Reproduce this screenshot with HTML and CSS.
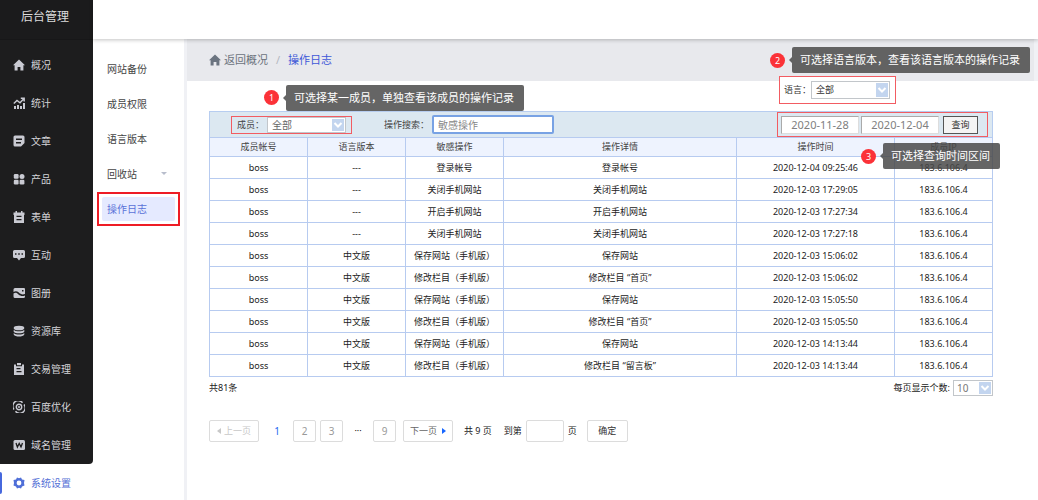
FILE: index.html
```html
<!DOCTYPE html>
<html lang="zh-CN">
<head>
    <meta charset="UTF-8">
    <meta name="viewport" content="width=device-width, initial-scale=1.0">
    <title>操作日志</title>
    <link rel="stylesheet" href="styles.css">
</head>
<body>
    <div class="app">
        <aside class="sidebar">
            <div class="brand">后台管理</div>
            <nav class="menu">
                <a href="#"><svg viewBox="0 0 12 12"><path d="M6 .5 0 6.300h1.600V11.500h3V8h2.800v3.500h3V6.300H12z"/></svg>概况</a>
                <a href="#"><svg viewBox="0 0 12 12"><path d="M1 9h2v3H1zM4 8h2v4H4zM7 9h2v3H7zM10 6h2v6h-2z"/><path class="line" d="M.8 6.500 4 3.500l3 2.200L11 1.500M7.800 1.200H11.200V4.500"/></svg>统计</a>
                <a href="#"><svg viewBox="0 0 12 12"><path fill-rule="evenodd" d="M2 .5h8A1.500 1.500 0 0 1 11.500 2v6L8 11.500H2A1.500 1.500 0 0 1 .5 10V2A1.500 1.500 0 0 1 2 .5zM3 3.500V5h6V3.500zM3 7v1.500h5V7z"/></svg>文章</a>
                <a href="#"><svg viewBox="0 0 12 12"><rect x=".8" y="1" width="4.800" height="4.800" rx="1.200"/><circle cx="9" cy="3.400" r="2.500"/><rect x=".8" y="6.700" width="4.800" height="4.800" rx="1.200"/><rect x="6.600" y="6.700" width="4.800" height="4.800" rx="1.200"/></svg>产品</a>
                <a href="#"><svg viewBox="0 0 12 12"><path fill-rule="evenodd" d="M.5 1.500H2.500V0H4v1.500h4V0h1.500v1.500h2V4h-.5v8H1V4H.5zM3.500 4.800V6h5V4.800zM3.500 8v1.200h5V8z"/></svg>表单</a>
                <a href="#"><svg viewBox="0 0 12 12"><path fill-rule="evenodd" d="M1.500 1h9A1.500 1.500 0 0 1 12 2.500v5A1.500 1.500 0 0 1 10.500 9H8l-2 2.500L4 9H1.500A1.500 1.500 0 0 1 0 7.500v-5A1.500 1.500 0 0 1 1.500 1zM2 4.300v1.500h1.500V4.300zM5.200 4.300v1.500h1.600V4.300zM8.500 4.300v1.500H10V4.300z"/></svg>互动</a>
                <a href="#"><svg viewBox="0 0 12 12"><path fill-rule="evenodd" d="M2 1h8.500A1.300 1.300 0 0 1 12 2.500V7C9 8 7.500 7 5.500 5.200 4 4 2 4 .5 5V2.500A1.500 1.500 0 0 1 2 1zM9 3v1.600h1.500V3zM.5 6.500C2.500 5.200 4 6 5.500 7.500 7.500 9 9.500 9.500 12 8.500v1a1.500 1.500 0 0 1-1.500 1.500H2A1.500 1.500 0 0 1 .5 9.500z"/></svg>图册</a>
                <a href="#"><svg viewBox="0 0 12 12"><ellipse cx="6" cy="3" rx="5.300" ry="2.300"/><path d="M.7 4.800c2 2 8.600 2 10.600 0v1.900c-1.500 2.200-9.100 2.200-10.600 0z"/><path d="M.7 8c2 2 8.600 2 10.600 0v1.500c-1.500 2.700-9.100 2.700-10.600 0z"/></svg>资源库</a>
                <a href="#"><svg viewBox="0 0 12 12"><path fill-rule="evenodd" d="M1 1.500h2V3.200h6V1.500h2V12H1zM3.500 5v1.300h4V5zM3.500 8v1.300h5V8z"/><path d="M4 0h4v2.200H4z"/></svg>交易管理</a>
                <a href="#"><svg viewBox="0 0 12 12"><path class="line" d="M1 8.500A5.400 5.400 0 0 1 9.500 1.700M11 3.500A5.400 5.400 0 0 1 2.500 10.300"/><circle class="line" cx="6" cy="6" r="2.700"/><circle cx="6" cy="6" r="1"/></svg>百度优化</a>
                <a href="#"><svg viewBox="0 0 12 12"><rect x=".5" y="1" width="11.500" height="10" rx="1.500"/><path class="mark" d="m3 4 1.400 4L6.200 4.500 8 8l1.500-4"/></svg>域名管理</a>
            </nav>
            <a class="settings" href="#"><svg viewBox="0 0 12 12"><path fill-rule="evenodd" d="M4 .5 6 1.200 8 .5l1 2 2.500.5-.5 3 .5 2.500-2.500 1-1 2-2-.7-2 .7-1-2-2.500-1L1 6 .5 3 3 2.500zM6 3.600A2.400 2.400 0 1 0 6 8.400 2.400 2.400 0 0 0 6 3.600z"/></svg>系统设置</a>
        </aside>

        <div class="page">
            <header class="topbar"></header>
            <div class="body">
                <nav class="submenu">
                    <a href="#">网站备份</a>
                    <a href="#">成员权限</a>
                    <a href="#">语言版本</a>
                    <a href="#">回收站<i class="caret"></i></a>
                    <div class="marked"><a class="active" href="#">操作日志</a></div>
                </nav>

                <main class="main">
                    <div class="crumbs">
                        <a class="back" href="#"><svg viewBox="0 0 12 12"><path d="M6 .5 0 6.300h1.600V11.500h3V8h2.800v3.500h3V6.300H12z"/></svg>返回概况</a>
                        <span class="slash">/</span>
                        <a class="here" href="#">操作日志</a>
                    </div>

                    <div class="content">
                        <div class="language frame">
                            <label for="language">语言：</label>
                            <span class="picker">
                                <select id="language"><option>全部</option></select>
                                <svg viewBox="0 0 12 12"><path d="m2.500 4 3.500 3.500L9.500 4"/></svg>
                            </span>
                            <div class="callout callout-left"><b>2</b><span>可选择语言版本，查看该语言版本的操作记录</span></div>
                        </div>

                        <form class="filters">
                            <div class="member frame">
                                <label for="member">成员：</label>
                                <span class="picker">
                                    <select id="member"><option>全部</option></select>
                                    <svg viewBox="0 0 12 12"><path d="m2.500 4 3.500 3.500L9.500 4"/></svg>
                                </span>
                                <div class="callout callout-up"><b>1</b><span>可选择某一成员，单独查看该成员的操作记录</span></div>
                            </div>
                            <label class="search-label" for="search">操作搜索：</label>
                            <input class="search" id="search" type="text" placeholder="敏感操作" autofocus>
                            <div class="dates frame">
                                <input type="text" aria-label="开始日期" value="2020-11-28">
                                <input type="text" aria-label="结束日期" value="2020-12-04">
                                <button type="button">查询</button>
                                <div class="callout callout-down"><b>3</b><span>可选择查询时间区间</span></div>
                            </div>
                        </form>

                        <table class="log">
                            <colgroup>
                                <col class="narrow"><col class="narrow"><col class="narrow"><col><col class="time"><col class="narrow">
                            </colgroup>
                            <thead>
                                <tr><th>成员帐号</th><th>语言版本</th><th>敏感操作</th><th>操作详情</th><th>操作时间</th><th>成员IP</th></tr>
                            </thead>
                            <tbody>
                                <tr><td>boss</td><td>---</td><td>登录帐号</td><td>登录帐号</td><td>2020-12-04 09:25:46</td><td>183.6.106.4</td></tr>
                                <tr><td>boss</td><td>---</td><td>关闭手机网站</td><td>关闭手机网站</td><td>2020-12-03 17:29:05</td><td>183.6.106.4</td></tr>
                                <tr><td>boss</td><td>---</td><td>开启手机网站</td><td>开启手机网站</td><td>2020-12-03 17:27:34</td><td>183.6.106.4</td></tr>
                                <tr><td>boss</td><td>---</td><td>关闭手机网站</td><td>关闭手机网站</td><td>2020-12-03 17:27:18</td><td>183.6.106.4</td></tr>
                                <tr><td>boss</td><td>中文版</td><td>保存网站（手机版）</td><td>保存网站</td><td>2020-12-03 15:06:02</td><td>183.6.106.4</td></tr>
                                <tr><td>boss</td><td>中文版</td><td>修改栏目（手机版）</td><td>修改栏目 “首页”</td><td>2020-12-03 15:06:02</td><td>183.6.106.4</td></tr>
                                <tr><td>boss</td><td>中文版</td><td>保存网站（手机版）</td><td>保存网站</td><td>2020-12-03 15:05:50</td><td>183.6.106.4</td></tr>
                                <tr><td>boss</td><td>中文版</td><td>修改栏目（手机版）</td><td>修改栏目 “首页”</td><td>2020-12-03 15:05:50</td><td>183.6.106.4</td></tr>
                                <tr><td>boss</td><td>中文版</td><td>保存网站（手机版）</td><td>保存网站</td><td>2020-12-03 14:13:44</td><td>183.6.106.4</td></tr>
                                <tr><td>boss</td><td>中文版</td><td>修改栏目（手机版）</td><td>修改栏目 “留言板”</td><td>2020-12-03 14:13:44</td><td>183.6.106.4</td></tr>
                            </tbody>
                        </table>

                        <div class="summary">
                            <span>共81条</span>
                            <div class="per-page">
                                <label for="size">每页显示个数:</label>
                                <span class="picker">
                                    <select id="size"><option>10</option></select>
                                    <svg viewBox="0 0 12 12"><path d="m2.500 4 3.500 3.500L9.500 4"/></svg>
                                </span>
                            </div>
                        </div>

                        <div class="pager">
                            <button class="step" type="button" disabled><i class="prev"></i>上一页</button>
                            <span class="current">1</span>
                            <button class="num" type="button">2</button>
                            <button class="num" type="button">3</button>
                            <span class="dots">···</span>
                            <button class="num" type="button">9</button>
                            <button class="step" type="button">下一页<i class="next"></i></button>
                            <span class="total">共 9 页</span>
                            <label for="goto">到第</label>
                            <input id="goto" type="text">
                            <span>页</span>
                            <button class="confirm" type="button">确定</button>
                        </div>
                    </div>
                </main>
            </div>
        </div>
    </div>
</body>
</html>
```
FILE: styles.css
```css
* {
    box-sizing: border-box;
}
body {
    margin: 0;
    font-family: "Noto Sans", "Noto Sans CJK SC", sans-serif;
    font-size: 9px;
    line-height: 16px;
    color: #222;
    background-color: #fff;
}
a {
    color: inherit;
    text-decoration: none;
}
input, select, button {
    font-family: inherit;
    font-size: 9px;
    line-height: 14px;
    color: #333;
    margin: 0;
    padding: 0;
    background-color: #fff;
    border: 1px solid #ccc;
    border-radius: 0;
    outline: none;
}
.app {
    display: flex;
    min-height: 100vh;
}

/* left navigation */
.sidebar {
    width: 93px;
    flex: none;
    font-size: 10px;
}
.brand {
    height: 40px;
    padding: 9px 0 0 21px;
    font-size: 12px;
    color: #ddd;
    background-color: #1b1b1c;
    border-bottom: 1px solid #171718;
}
.menu {
    padding-top: 6px;
    color: #d4d4d8;
    background-color: #1d1d1e;
    border-bottom-right-radius: 4px;
}
.menu a, .settings {
    display: flex;
    align-items: center;
    height: 38px;
    padding-left: 13px;
    gap: 6px;
}
.sidebar svg {
    width: 12px;
    height: 12px;
    fill: #c9cad2;
}
.sidebar .line {
    fill: none;
    stroke: #c9cad2;
    stroke-width: 1.4;
}
.sidebar .mark {
    fill: none;
    stroke: #1d1d1e;
    stroke-width: 1.3;
}
.settings {
    position: relative;
    color: #5470d6;
}
.settings::before {
    content: "";
    position: absolute;
    left: 0;
    top: 8px;
    width: 2px;
    height: 22px;
    background-color: #4668dd;
    border-radius: 0 2px 2px 0;
}
.sidebar .settings svg {
    fill: #4f6fd8;
}

.page {
    flex: 1;
    display: flex;
    flex-direction: column;
    min-width: 0;
}
.topbar {
    position: relative;
    height: 39px;
    background-color: #fff;
    box-shadow: 0 1px 4px rgba(0, 0, 0, 0.24);
}
.body {
    flex: 1;
    display: flex;
}

/* second level menu */
.submenu {
    width: 94px;
    flex: none;
    padding-top: 12px;
    font-size: 10px;
    color: #444;
    border-right: 3px solid #f0f1f5;
}
.submenu a {
    display: flex;
    align-items: center;
    height: 35px;
    padding: 0 17px 0 14px;
}
.caret {
    margin-left: auto;
    border: 3px solid transparent;
    border-top-color: #b8bdcc;
    border-bottom: 0;
}
.submenu .marked {
    margin: 1px 4px 0;
    padding: 3px;
    border: 2px solid #ee1c25;
}
.submenu .active {
    height: 24px;
    padding: 0 5px;
    color: #5b72d8;
    background-color: #e5eaff;
    border-radius: 2px;
}

/* page content */
.main {
    flex: 1;
    min-width: 0;
}
.crumbs {
    display: flex;
    align-items: center;
    height: 42px;
    padding-left: 22px;
    gap: 8px;
    font-size: 11px;
    color: #6b727c;
    background-color: #e8e9ed;
    border-right: 4px solid #f0f1f5;
}
.back {
    display: flex;
    align-items: center;
    gap: 3px;
}
.back svg {
    width: 12px;
    height: 12px;
    fill: #6b7480;
}
.slash {
    color: #b3b7bf;
}
.here {
    color: #4058d8;
}
.content {
    display: flex;
    flex-direction: column;
    padding: 0 45px 20px 22px;
}
.frame {
    position: relative;
    display: flex;
    align-items: center;
    border: 1px solid #f25c62;
}
.language {
    align-self: flex-end;
    width: 117px;
    height: 28px;
    margin: -5px 97px 7px 0;
    padding-left: 4px;
    color: #333;
    background-color: #fff;
}
.picker {
    position: relative;
    display: flex;
    width: 79px;
}
.picker select {
    appearance: none;
    width: 100%;
    height: 18px;
    padding-left: 4px;
    border: 1px solid #c2c6ca;
}
.picker svg {
    position: absolute;
    right: 2px;
    top: 2px;
    bottom: 2px;
    width: 12px;
    height: calc(100% - 4px);
    background-color: #c3d5ef;
    fill: none;
    stroke: #fff;
    stroke-width: 2;
    pointer-events: none;
}

.filters {
    display: flex;
    align-items: center;
    height: 26px;
    padding: 0 4px 0 21px;
    color: #444;
    background-color: #dce8f1;
    border: 1px solid #b7cdf0;
    border-bottom: 0;
}
.member {
    width: 121px;
    height: 18px;
    padding-left: 5px;
}
.member label {
    width: 30px;
}
.language label {
    width: 27px;
}
.member select {
    height: 16px;
    font-size: 10px;
    color: #666;
}
.search-label {
    width: 48px;
    margin-left: 32px;
}
.search {
    width: 122px;
    height: 19px;
    padding-left: 4px;
    font-size: 10px;
    border: 2px solid #78a2e4;
    border-radius: 2px;
}
.search::placeholder {
    color: #888;
}
.dates {
    height: 25px;
    margin-left: auto;
    padding: 0 9px 0 3px;
    gap: 2px;
}
.dates input {
    width: 78px;
    height: 18px;
    text-align: center;
    font-size: 11px;
    color: #808080;
    border-color: #aaa #ddd #ddd #aaa;
}
.dates button {
    width: 35px;
    height: 18px;
    margin-left: 2px;
    background-color: #f4f4f4;
    border-color: #555;
}

/* numbered hints */
.callout {
    position: absolute;
    z-index: 2;
    display: flex;
    align-items: center;
    gap: 7px;
    font-size: 11px;
    color: #fff;
    white-space: nowrap;
}
.callout b {
    width: 15px;
    height: 15px;
    border-radius: 50%;
    background-color: #fb3238;
    font-size: 9px;
    line-height: 15px;
    font-weight: 400;
    text-align: center;
}
.callout span {
    position: relative;
    padding: 5px 10px 5px 8px;
    background-color: rgba(72, 72, 72, 0.84);
    border-radius: 2px;
}
.callout span::before {
    content: "";
    position: absolute;
    left: -3px;
    top: 10px;
    border: 3px solid transparent;
    border-right-color: rgba(72, 72, 72, 0.84);
    border-left: 0;
}
.callout-up {
    left: 32px;
    bottom: 22px;
}
.callout-left {
    right: -135px;
    bottom: 30px;
}
.callout-down {
    right: -13px;
    top: 30px;
}

.log {
    width: 100%;
    table-layout: fixed;
    border-collapse: collapse;
    text-align: center;
}
.narrow {
    width: 98px;
}
.time {
    width: 158px;
}
.log th, .log td {
    height: 22px;
    padding: 0;
    border: 1px solid #b7cbf0;
    white-space: nowrap;
}
.log th {
    height: 19px;
    font-weight: 400;
    color: #444;
    background-color: #eef3fe;
}

.summary {
    display: flex;
    justify-content: space-between;
    align-items: center;
    height: 22px;
}
.per-page {
    display: flex;
    align-items: center;
    gap: 3px;
}
.per-page .picker {
    width: 40px;
}
.per-page select {
    height: 16px;
    padding-left: 3px;
    font-size: 10px;
    color: #777;
}

.pager {
    display: flex;
    align-items: center;
    margin-top: 21px;
    gap: 4px;
}
.pager button, .pager input {
    height: 22px;
    border-color: #dcdcdc;
    border-radius: 2px;
}
.pager .step {
    display: flex;
    align-items: center;
    justify-content: center;
    width: 50px;
    gap: 5px;
    color: #666;
}
.pager .step:disabled {
    gap: 3px;
    color: #c8c8c8;
}
.pager .num {
    width: 23px;
    font-size: 10px;
    color: #999;
}
.prev, .next {
    border: 3px solid transparent;
}
.prev {
    border-right: 4px solid #c8c8c8;
    border-left: 0;
}
.next {
    border-left: 4px solid #1766ff;
    border-right: 0;
}
.current {
    width: 26px;
    padding-left: 2px;
    text-align: center;
    font-size: 10px;
    color: #2468f2;
}
.dots {
    width: 22px;
    text-align: center;
}
.pager .num + .step {
    margin-left: 3px;
}
.total {
    margin: 0 8px 0 7px;
}
.pager input {
    width: 38px;
}
.pager .confirm {
    width: 41px;
    margin-left: 6px;
}
```
